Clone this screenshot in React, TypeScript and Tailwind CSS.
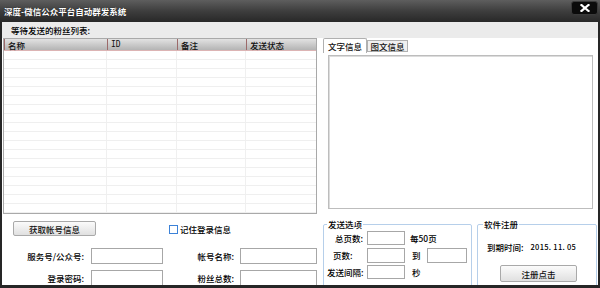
import React from "react";

const FONT = { fontFamily: '"Noto Sans CJK SC", "Noto Sans", sans-serif' };

function Input({ w, h = 14, className = "" }: { w: number; h?: number; className?: string }) {
  return (
    <div
      className={"bg-white border border-[#a7a7a7] " + className}
      style={{ width: w, height: h }}
    />
  );
}

export default function App() {
  const rows = Array.from({ length: 18 });
  return (
    <div
      className="w-[600px] h-[288px] bg-[#262626] flex flex-col overflow-hidden text-[8.5px] leading-[10px] text-black font-medium"
      style={FONT}
    >
      {/* title bar */}
      <div className="h-[22px] flex items-start bg-gradient-to-b from-[#5e5e5e] via-[#3e3e3e] to-[#282828]">
        <div className="pl-[4px] pt-[5px] text-white font-bold text-[8.5px] leading-[12px] [text-shadow:0_0_1px_#000]">
          深度-微信公众平台自动群发系统
        </div>
        <div className="ml-auto mr-[2px] mt-[1px] w-[27px] h-[14px] bg-[#0b0b0b] rounded-[3px] flex items-center justify-center border border-[#3a3a3a]">
          <svg width="10" height="8" viewBox="0 0 10 8">
            <path d="M1.5 1 L8.5 7 M8.5 1 L1.5 7" stroke="#fff" strokeWidth="2.2" strokeLinecap="square" />
          </svg>
        </div>
      </div>

      {/* body */}
      <div className="mx-[2px] h-[263px] bg-white flex flex-col overflow-hidden">
        <div className="h-[16px] bg-[#ebebeb] pl-[9px] flex items-center">等待发送的粉丝列表:</div>

        <div className="flex h-[176px]">
          {/* list */}
          <div className="ml-[1px] w-[314px] h-[176px] border border-[#a9a9a9] flex flex-col bg-white">
            <div className="h-[12px] flex bg-gradient-to-b from-[#e2e2e2] to-[#b4b4b4] border-b border-[#dcb4b4] text-[#111]">
              {[
                ["名称", 103],
                ["ID", 70],
                ["备注", 69],
                ["发送状态", 70],
              ].map(([t, w], i) => (
                <div
                  key={i}
                  className="flex items-center border-l border-[#9c6a6a] pl-[3px] h-[11px]"
                  style={{ width: w as number, fontFamily: i === 1 ? '"DejaVu Sans Mono", monospace' : undefined, fontSize: i === 1 ? 8 : undefined }}
                >
                  {t}
                </div>
              ))}
            </div>
            {rows.map((_, r) => (
              <div key={r} className="h-[9px] flex border-b border-[#efefef]">
                <div className="w-[103px] border-r border-[#f0f0f0]" />
                <div className="w-[70px] border-r border-[#f0f0f0]" />
                <div className="w-[69px] border-r border-[#f0f0f0]" />
                <div className="flex-1" />
              </div>
            ))}
          </div>

          {/* right column */}
          <div className="ml-[6px] flex flex-col">
            <div className="h-[15px] flex items-start">
              <div className="w-[44px] h-[15px] bg-white border border-b-0 border-[#b0b0b0] rounded-t-[2px] flex items-center justify-center text-[#111]">
                文字信息
              </div>
              <div className="mt-[2px] w-[41px] h-[12px] bg-[#f0f0f0] border border-[#b0b0b0] flex items-center justify-center text-[#111]">
                图文信息
              </div>
            </div>
            <div className="mt-[2px] ml-[5px] w-[265px] h-[154px] bg-white border border-[#bdbdbd] shadow-[inset_1px_1px_0_#dcdcdc]" />
          </div>
        </div>

        {/* bottom */}
        <div className="flex h-[71px]">
          <div className="w-[318px] flex flex-col">
            <div className="mt-[7px] flex items-start">
              <div className="ml-[11px] w-[83px] h-[15px] border border-[#a9a9a9] rounded-[2px] bg-gradient-to-b from-[#fbfbfb] to-[#e0e0e0] flex items-center justify-center text-[#111]">
                获取帐号信息
              </div>
              <div className="ml-[73px] mt-[3px] flex items-center">
                <div className="w-[9px] h-[9px] border border-[#3c82d8] bg-white" />
                <span className="ml-[2px]">记住登录信息</span>
              </div>
            </div>
            <div className="mt-[12px] flex items-center h-[16px]">
              <div className="w-[82px] text-right">服务号/公众号:</div>
              <Input w={72} h={16} className="ml-[7px]" />
              <div className="w-[71px] text-right">帐号名称:</div>
              <Input w={77} h={16} className="ml-[6px]" />
            </div>
            <div className="mt-[6px] flex items-center h-[16px]">
              <div className="w-[82px] text-right">登录密码:</div>
              <Input w={72} h={16} className="ml-[7px]" />
              <div className="w-[71px] text-right">粉丝总数:</div>
              <Input w={77} h={16} className="ml-[6px]" />
            </div>
          </div>

          <fieldset className="ml-[3px] mt-[5px] w-[149px] h-[75px] border border-[#b6cfea] rounded-[2px]">
            <legend className="ml-[3px] px-[1px] leading-[10px]">发送选项</legend>
            <div className="pt-[2px] flex flex-col gap-[3px]">
              <div className="flex items-center h-[14px]">
                <div className="w-[43px] pl-[11px]">总页数:</div>
                <Input w={38} />
                <div className="ml-[5px]">每50页</div>
              </div>
              <div className="flex items-center h-[14px]">
                <div className="w-[43px] pl-[9px]">页数:</div>
                <Input w={38} h={15} />
                <div className="ml-[7px]">到</div>
                <Input w={40} h={15} className="ml-[6px]" />
              </div>
              <div className="flex items-center h-[14px]">
                <div className="w-[43px] pl-[3px]">发送间隔:</div>
                <Input w={38} />
                <div className="ml-[7px]">秒</div>
              </div>
            </div>
          </fieldset>

          <fieldset className="ml-[5px] mt-[5px] w-[120px] h-[75px] border border-[#b6cfea] rounded-[2px]">
            <legend className="ml-[5px] px-[1px] leading-[10px]">软件注册</legend>
            <div className="mt-[13px] pl-[9px] flex items-center">
              <span>到期时间:</span>
              <span className="ml-[7px] text-[7.5px] tracking-[0.3px]">2015. 11. 05</span>
            </div>
            <div className="mt-[13px] ml-[22px] w-[77px] h-[17px] border border-[#a9a9a9] rounded-[2px] bg-gradient-to-b from-[#fbfbfb] to-[#e0e0e0] flex items-center justify-center text-[#111]">
              注册点击
            </div>
          </fieldset>
        </div>
      </div>
    </div>
  );
}
